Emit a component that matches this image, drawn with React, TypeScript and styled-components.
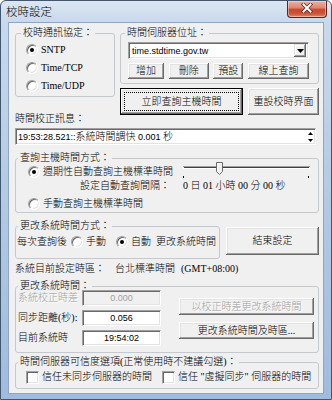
import React from "react";
import styled, { createGlobalStyle } from "styled-components";

const labelFont = `"Liberation Serif", "Noto Sans CJK TC", serif`;
const editFont = `"Liberation Sans", "Noto Sans CJK TC", sans-serif`;

const GlobalStyle = createGlobalStyle`
    html, body {
        margin: 0;
        padding: 0;
    }
    body {
        width: 332px;
        height: 400px;
        overflow: hidden;
        background: #ffffff;
    }
    * {
        box-sizing: border-box;
    }
`;

const Window = styled.div`
    width: 332px;
    height: 400px;
    display: flex;
    flex-direction: column;
    border: 1px solid #44566d;
    border-radius: 6px 6px 0 0;
    background: linear-gradient(180deg, #dce7f3 0px, #c8d9ec 21px, #b0c8e4 55%, #9fbbde 100%);
    overflow: hidden;
`;

const TitleBar = styled.div`
    height: 21px;
    flex: none;
    display: flex;
    align-items: flex-start;
    padding-left: 5px;
`;

const Title = styled.span`
    font: 300 11.5px/20px "Noto Sans CJK TC", sans-serif;
    color: #000;
`;

const CloseButton = styled.div`
    width: 40px;
    height: 17px;
    margin-left: auto;
    margin-right: 4px;
    padding-bottom: 2px;
    display: flex;
    align-items: center;
    justify-content: center;
    border: 1px solid #5c231a;
    border-top: none;
    border-radius: 0 0 4px 4px;
    background: linear-gradient(180deg, #eab2a6 0%, #dc8a78 40%, #c8462f 55%, #d0553b 80%, #e08a68 100%);
    box-shadow: inset 0 0 0 1px rgba(255, 235, 230, 0.45);
`;

const Client = styled.div`
    flex: 1;
    min-height: 0;
    margin: 0 7px 5px 7px;
    border: 1px solid #8ea6c3;
    background: #f0f0f0;
    padding: 3px 4px 0 6px;
    display: flex;
    flex-direction: column;
    font: 300 10px/14px ${labelFont};
    color: #000;
`;

const Group = styled.fieldset<{ $height: number; $width?: number }>`
    height: ${p => p.$height}px;
    ${p => (p.$width ? `width: ${p.$width}px; flex: none;` : "")}
    margin: 0;
    padding: 0;
    min-width: 0;
    border: 1px solid #c4c9ce;
    border-radius: 3px;
`;

const Legend = styled.legend<{ $indent: number }>`
    margin-left: ${p => p.$indent}px;
    padding: 0 2px;
    line-height: 14px;
    white-space: nowrap;
`;

const TopArea = styled.div`
    display: grid;
    grid-template-columns: 100px 199px;
    column-gap: 5px;
    align-items: start;
`;

const Column = styled.div`
    display: flex;
    flex-direction: column;
`;

const Caption = styled.div<{ $top: number }>`
    margin-top: ${p => p.$top}px;
    white-space: nowrap;
`;

const ProtocolList = styled.div`
    display: grid;
    grid-auto-rows: 18px;
    padding: 1px 0 0 10px;
`;

const Option = styled.label`
    display: flex;
    align-items: center;
    gap: 3px;
    height: 14px;
    white-space: nowrap;
`;

const ProtocolOption = styled(Option)`
    height: 18px;
`;

const Radio = styled.span<{ $checked?: boolean }>`
    flex: none;
    width: 12px;
    height: 12px;
    border-radius: 50%;
    border: 1px solid;
    border-color: #a0a0a0 #ffffff #ffffff #a0a0a0;
    background: #ffffff;
    box-shadow: inset 1px 1px 0 #696969, inset -1px -1px 0 #e3e3e3;
    display: flex;
    align-items: center;
    justify-content: center;

    &::after {
        content: "";
        width: 4px;
        height: 4px;
        border-radius: 50%;
        background: ${p => (p.$checked ? "#000000" : "transparent")};
    }
`;

const Checkbox = styled.span`
    flex: none;
    width: 13px;
    height: 13px;
    border: 1px solid;
    border-color: #a0a0a0 #ffffff #ffffff #a0a0a0;
    background: #ffffff;
    box-shadow: inset 1px 1px 0 #696969, inset -1px -1px 0 #e3e3e3;
`;

const ServerBody = styled.div`
    display: flex;
    flex-direction: column;
    gap: 4px;
    padding: 2px 0 0 7px;
    width: 188px;
`;

const Sunken = styled.div<{ $disabled?: boolean }>`
    border: 1px solid;
    border-color: #a0a0a0 #ffffff #ffffff #a0a0a0;
    box-shadow: inset 1px 1px 0 #696969, inset -1px -1px 0 #e3e3e3;
    background: ${p => (p.$disabled ? "#f0f0f0" : "#ffffff")};
    color: ${p => (p.$disabled ? "#a0a0a0" : "#000000")};
    font: 9px/14px ${editFont};
    white-space: nowrap;
    overflow: hidden;
`;

const Combo = styled(Sunken)`
    width: 181px;
    height: 17px;
    display: flex;
    align-items: center;
    padding: 0 2px 0 3px;
`;

const ComboText = styled.span`
    flex: 1;
`;

const DropButton = styled.span`
    width: 12px;
    height: 13px;
    display: flex;
    align-items: center;
    justify-content: center;
    background: #f0f0f0;
    box-shadow: inset -1px -1px 0 #696969, inset 1px 1px 0 #e3e3e3, inset -2px -2px 0 #a0a0a0, inset 2px 2px 0 #ffffff;
`;

const ButtonRow = styled.div`
    display: flex;
    justify-content: space-between;
    width: 181px;
`;

const Button = styled.button<{ $w: number; $h: number; $default?: boolean }>`
    flex: none;
    width: ${p => p.$w}px;
    height: ${p => p.$h}px;
    margin: 0;
    padding: 0;
    background: #f0f0f0;
    border: ${p => (p.$default ? "1px solid #000000" : "none")};
    box-shadow: inset -1px -1px 0 #696969, inset 1px 1px 0 #ffffff, inset -2px -2px 0 #a0a0a0,
        inset 2px 2px 0 #e3e3e3;
    font: 300 10px/12px ${labelFont};
    color: #000000;
    white-space: nowrap;
    ${p => (p.$default ? "outline: 1px dotted #000000; outline-offset: -5px;" : "")}

    &:disabled {
        color: #a0a0a0;
        text-shadow: 1px 1px 0 #ffffff;
    }
`;

const ActionRow = styled.div`
    display: flex;
    gap: 5px;
    margin-top: 4px;
`;

const MessageBox = styled(Sunken)`
    margin-top: 2px;
    width: 301px;
    height: 17px;
    display: flex;
    align-items: center;
    padding: 0 0 0 2px;
`;

const MessageText = styled.span`
    flex: 1;
`;

const Wide = styled.span`
    font-size: 10px;
    font-weight: 300;
`;

const Spin = styled.span`
    width: 10px;
    height: 15px;
    display: flex;
    flex-direction: column;
    align-items: center;
    justify-content: space-between;
    padding: 3px 0 2px;
`;

const QueryGroup = styled(Group)`
    margin-top: 6px;
`;

const QueryBody = styled.div`
    display: grid;
    grid-template-columns: 142px 127px;
    column-gap: 13px;
    padding-left: 12px;
`;

const RightLabel = styled.div`
    text-align: right;
    white-space: nowrap;
    line-height: 13px;
`;

const Value = styled.div`
    white-space: nowrap;
    line-height: 13px;
`;

const SliderBox = styled.svg`
    margin-top: -3px;
    display: block;
`;

const ManualOption = styled(Option)`
    grid-column: 1 / span 2;
    margin-top: 5px;
`;

const ModeRow = styled.div`
    display: flex;
    gap: 6px;
    margin-top: 6px;
`;

const ModeBody = styled.div`
    display: flex;
    align-items: center;
    height: 14px;
    margin-top: 2px;
    padding-left: 1px;
    white-space: nowrap;
`;

const Spaced = styled.span<{ $left: number }>`
    display: flex;
    align-items: center;
    gap: 3px;
    margin-left: ${p => p.$left}px;
`;

const EndButton = styled(Button)`
    margin-top: 8px;
`;

const ZoneRow = styled.div`
    display: flex;
    margin-top: 3px;
    white-space: nowrap;
`;

const ZoneLabel = styled.span`
    width: 100px;
`;

const ZoneOffset = styled.span`
    margin-left: 6px;
`;

const AdjustGroup = styled(Group)`
    margin-top: 3px;
`;

const AdjustBody = styled.div`
    display: flex;
    margin-top: -3px;
    padding-left: 2px;
`;

const FieldGrid = styled.div`
    display: grid;
    grid-template-columns: 64px 79px;
    grid-auto-rows: 16px;
    row-gap: 4px;
    align-items: center;
`;

const FieldLabel = styled.span<{ $disabled?: boolean }>`
    white-space: nowrap;
    color: ${p => (p.$disabled ? "#a0a0a0" : "#000000")};
    text-shadow: ${p => (p.$disabled ? "1px 1px 0 #ffffff" : "none")};
`;

const Field = styled(Sunken)`
    height: 16px;
    text-align: center;
    line-height: 14px;
`;

const AdjustButtons = styled.div`
    display: flex;
    flex-direction: column;
    gap: 7px;
    padding-top: 8px;
    margin-left: 18px;
`;

const TrustGroup = styled(Group)`
    margin-top: 2px;
`;

const TrustBody = styled.div`
    display: grid;
    grid-template-columns: 136px auto;
    padding: 1px 0 0 10px;
`;

const CloseGlyph = () => (
    <svg width="12" height="10" viewBox="0 0 12 10">
        <path d="M2.5 1.5 L9.5 8.5 M9.5 1.5 L2.5 8.5" stroke="#5a2a22" strokeWidth="3.6" strokeLinecap="square" />
        <path d="M2.5 1.5 L9.5 8.5 M9.5 1.5 L2.5 8.5" stroke="#ffffff" strokeWidth="2" strokeLinecap="square" />
    </svg>
);

const DownArrow = ({ w = 7, h = 4 }: { w?: number; h?: number }) => (
    <svg width={w} height={h} viewBox={`0 0 ${w} ${h}`}>
        <polygon points={`0,0 ${w},0 ${w / 2},${h}`} fill="#000" />
    </svg>
);

const UpArrow = ({ w = 5, h = 3 }: { w?: number; h?: number }) => (
    <svg width={w} height={h} viewBox={`0 0 ${w} ${h}`}>
        <polygon points={`0,${h} ${w},${h} ${w / 2},0`} fill="#000" />
    </svg>
);

const Slider = () => (
    <SliderBox width="127" height="16" viewBox="0 0 127 16">
        <line x1="0" y1="4.5" x2="127" y2="4.5" stroke="#a0a0a0" />
        <line x1="1" y1="5.5" x2="126" y2="5.5" stroke="#404040" />
        <line x1="0" y1="6.5" x2="127" y2="6.5" stroke="#ffffff" />
        <polygon points="33.5,0.5 39.5,0.5 39.5,9.5 36.5,12.5 33.5,9.5" fill="#f0f0f0" stroke="#696969" />
        <polyline points="34.5,9 34.5,1.5 38.5,1.5" fill="none" stroke="#ffffff" />
        <line x1="0.5" y1="14" x2="0.5" y2="16" stroke="#000" />
        <line x1="125.5" y1="14" x2="125.5" y2="16" stroke="#000" />
    </SliderBox>
);

const App = () => (
    <>
        <GlobalStyle />
        <Window>
            <TitleBar>
                <Title>校時設定</Title>
                <CloseButton>
                    <CloseGlyph />
                </CloseButton>
            </TitleBar>
            <Client>
                <TopArea>
                    <Column>
                        <Group $height={71}>
                            <Legend $indent={5}>校時通訊協定：</Legend>
                            <ProtocolList>
                                <ProtocolOption>
                                    <Radio $checked />
                                    SNTP
                                </ProtocolOption>
                                <ProtocolOption>
                                    <Radio />
                                    Time/TCP
                                </ProtocolOption>
                                <ProtocolOption>
                                    <Radio />
                                    Time/UDP
                                </ProtocolOption>
                            </ProtocolList>
                        </Group>
                        <Caption $top={15}>時間校正訊息：</Caption>
                    </Column>
                    <Column>
                        <Group $height={58}>
                            <Legend $indent={4}>時間伺服器位址：</Legend>
                            <ServerBody>
                                <Combo>
                                    <ComboText>time.stdtime.gov.tw</ComboText>
                                    <DropButton>
                                        <DownArrow />
                                    </DropButton>
                                </Combo>
                                <ButtonRow>
                                    <Button $w={36} $h={16}>增加</Button>
                                    <Button $w={40} $h={16}>刪除</Button>
                                    <Button $w={30} $h={16}>預設</Button>
                                    <Button $w={61} $h={16}>線上查詢</Button>
                                </ButtonRow>
                            </ServerBody>
                        </Group>
                        <ActionRow>
                            <Button $w={123} $h={27} $default>
                                立即查詢主機時間
                            </Button>
                            <Button $w={71} $h={27}>
                                重設校時界面
                            </Button>
                        </ActionRow>
                    </Column>
                </TopArea>

                <MessageBox>
                    <MessageText>
                        19:53:28.521::<Wide>系統時間調快</Wide> 0.001 <Wide>秒</Wide>
                    </MessageText>
                    <Spin>
                        <UpArrow />
                        <DownArrow w={5} h={3} />
                    </Spin>
                </MessageBox>

                <QueryGroup $height={62}>
                    <Legend $indent={2}>查詢主機時間方式：</Legend>
                    <QueryBody>
                        <Option>
                            <Radio $checked />
                            週期性自動查詢主機標準時間
                        </Option>
                        <Slider />
                        <RightLabel>設定自動查詢間隔：</RightLabel>
                        <Value>0 日 01 小時 00 分 00 秒</Value>
                        <ManualOption>
                            <Radio />
                            手動查詢主機標準時間
                        </ManualOption>
                    </QueryBody>
                </QueryGroup>

                <ModeRow>
                    <Group $height={40} $width={205}>
                        <Legend $indent={2}>更改系統時間方式：</Legend>
                        <ModeBody>
                            每次查詢後
                            <Spaced $left={4}>
                                <Radio />
                                手動
                            </Spaced>
                            <Spaced $left={10}>
                                <Radio $checked />
                                自動
                            </Spaced>
                            <Spaced $left={5}>更改系統時間</Spaced>
                        </ModeBody>
                    </Group>
                    <EndButton $w={93} $h={28}>
                        結束設定
                    </EndButton>
                </ModeRow>

                <ZoneRow>
                    <ZoneLabel>系統目前設定時區：</ZoneLabel>
                    <span>台北標準時間</span>
                    <ZoneOffset>(GMT+08:00)</ZoneOffset>
                </ZoneRow>

                <AdjustGroup $height={74}>
                    <Legend $indent={2}>更改系統時間：</Legend>
                    <AdjustBody>
                        <FieldGrid>
                            <FieldLabel $disabled>系統校正時差</FieldLabel>
                            <Field $disabled>0.000</Field>
                            <FieldLabel>同步距離(秒):</FieldLabel>
                            <Field>0.056</Field>
                            <FieldLabel>目前系統時</FieldLabel>
                            <Field>19:54:02</Field>
                        </FieldGrid>
                        <AdjustButtons>
                            <Button $w={135} $h={17} disabled>
                                以校正時差更改系統時間
                            </Button>
                            <Button $w={135} $h={17}>
                                更改系統時間及時區...
                            </Button>
                        </AdjustButtons>
                    </AdjustBody>
                </AdjustGroup>

                <TrustGroup $height={34}>
                    <Legend $indent={2}>時間伺服器可信度選項(正常使用時不建議勾選)：</Legend>
                    <TrustBody>
                        <Option>
                            <Checkbox />
                            信任未同步伺服器的時間
                        </Option>
                        <Option>
                            <Checkbox />
                            信任 "虛擬同步" 伺服器的時間
                        </Option>
                    </TrustBody>
                </TrustGroup>
            </Client>
        </Window>
    </>
);

export default App;
